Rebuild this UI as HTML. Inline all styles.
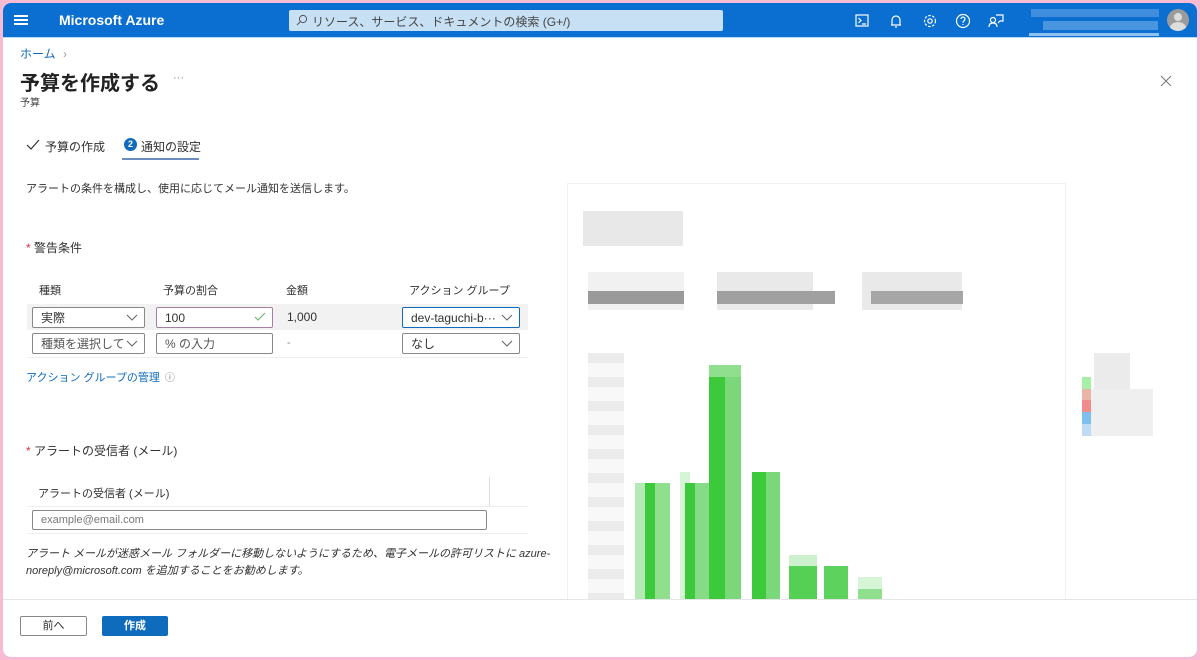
<!DOCTYPE html>
<html><head><meta charset="utf-8"><style>
*{box-sizing:border-box;margin:0;padding:0}
body{width:1200px;height:660px;background:#f7bcd3;font-family:"Liberation Sans","Noto Sans CJK JP",sans-serif;position:relative;overflow:hidden;color:#323130}
.a{position:absolute;white-space:nowrap}
.box{position:absolute;border:1px solid #8a8886;border-radius:2px;background:#fff;font-size:12px;padding-left:8px;line-height:20px;white-space:nowrap}
.chev{position:absolute;right:6px;top:3px}
.g{position:absolute}
</style></head><body>
<div class="a" style="left:3px;top:3px;width:1194px;height:654px;background:#fff;border-radius:8px"></div>
<div class="a" style="left:3px;top:3px;width:1194px;height:34px;background:#0a6fd0;border-radius:8px 8px 0 0"></div>
<div class="a" style="left:14px;top:15px;width:14px;height:2px;background:#fff;box-shadow:0 4px 0 #fff,0 8px 0 #fff"></div>
<div class="a" style="left:59px;top:12px;color:#fff;font-size:14px;font-weight:bold">Microsoft Azure</div>
<div class="a" style="left:289px;top:10px;width:434px;height:21px;background:#c7e0f4;border-radius:2px"></div>
<svg class="a" style="left:296px;top:14px" width="12" height="12" viewBox="0 0 12 12"><circle cx="7" cy="5" r="3.6" fill="none" stroke="#555" stroke-width="1"/><path d="M4.4 7.6L1 11" stroke="#555"/></svg>
<div class="a" style="left:312px;top:13px;font-size:12px;color:#444">リソース、サービス、ドキュメントの検索 (G+/)</div>
<svg class="a" style="left:855px;top:13px" width="120" height="16" viewBox="0 0 120 16" fill="none" stroke="#fff" stroke-width="1.2">
 <rect x="1" y="2" width="12" height="11"/><path d="M3.5 5l2.5 2.5-2.5 2.5M7 11h4"/>
 <path d="M37 12V7a4 4 0 018 0v5zM36 12h10M40 14h2"/>
 <circle cx="75" cy="8" r="2.2"/><circle cx="75" cy="8" r="5.5" stroke-dasharray="2.5 1.5"/>
 <circle cx="108" cy="8" r="6.5"/><path d="M106 6a2 2 0 113 1.8c-1 .5-1 1-1 2M108 11v1"/>
</svg>
<svg class="a" style="left:988px;top:13px" width="16" height="16" fill="none" stroke="#fff" stroke-width="1.2"><circle cx="5" cy="7" r="2.5"/><path d="M1 14c0-3 2-4 4-4s4 1 4 4M8 2h7v6h-3l-2 2"/></svg>
<div class="a" style="left:1031px;top:9px;width:128px;height:8px;background:#4f95e0;opacity:.8"></div>
<div class="a" style="left:1043px;top:21px;width:115px;height:9px;background:#5a9fe3;opacity:.8"></div>
<div class="a" style="left:1029px;top:33px;width:130px;height:3px;background:#8fc0ee"></div>
<div class="a" style="left:1167px;top:9px;width:22px;height:22px;border-radius:50%;background:#9b9b9b;overflow:hidden"><div style="position:absolute;left:7px;top:4px;width:8px;height:8px;border-radius:50%;background:#ddd"></div><div style="position:absolute;left:3px;top:13px;width:16px;height:12px;border-radius:50%;background:#ddd"></div></div>
<div class="a" style="left:3px;top:37px;width:1194px;height:1px;background:#b9dcf6"></div>
<div class="a" style="left:20px;top:45px;font-size:12px;color:#0f6cbd">ホーム <span style="color:#999;margin-left:4px">›</span></div>
<div class="a" style="left:20px;top:67px;font-size:20px;font-weight:bold;color:#222">予算を作成する</div>
<div class="a" style="left:173px;top:72px;font-size:11px;color:#888">···</div>
<div class="a" style="left:20px;top:94px;font-size:10px;color:#444">予算</div>
<svg class="a" style="left:1160px;top:75px" width="12" height="12" stroke="#777" stroke-width="1"><path d="M1 1l10 10M11 1L1 11"/></svg>
<svg class="a" style="left:26px;top:139px" width="14" height="12" fill="none" stroke="#333" stroke-width="1.2"><path d="M1 6l4 4 8-9"/></svg>
<div class="a" style="left:45px;top:138px;font-size:12px">予算の作成</div>
<div class="a" style="left:124px;top:138px;width:13px;height:13px;border-radius:50%;background:#0f6cbd;color:#fff;font-size:9px;font-weight:bold;text-align:center;line-height:13px">2</div>
<div class="a" style="left:141px;top:138px;font-size:12px">通知の設定</div>
<div class="a" style="left:122px;top:158px;width:77px;height:2px;background:#6a8dbd"></div>
<div class="a" style="left:26px;top:180px;font-size:11px">アラートの条件を構成し、使用に応じてメール通知を送信します。</div>
<div class="a" style="left:26px;top:239px;font-size:12px"><span style="color:#d13438">*</span> 警告条件</div>
<div class="a" style="left:39px;top:282px;font-size:11px">種類</div>
<div class="a" style="left:163px;top:282px;font-size:11px">予算の割合</div>
<div class="a" style="left:286px;top:282px;font-size:11px">金額</div>
<div class="a" style="left:409px;top:282px;font-size:11px">アクション グループ</div>
<div class="a" style="left:27px;top:304px;width:501px;height:26px;background:#f2f2f2"></div>
<div class="box" style="left:32px;top:307px;width:113px;height:21px">実際<svg class="chev" width="12" height="12" fill="none" stroke="#666"><path d="M1 4l5 5 5-5"/></svg></div>
<div class="box" style="left:156px;top:307px;width:117px;height:21px;border-color:#a57fa0">100<svg class="chev" width="12" height="12" fill="none" stroke="#6bb36b"><path d="M1 6l3 3 7-7"/></svg></div>
<div class="a" style="left:287px;top:310px;font-size:12px">1,000</div>
<div class="box" style="left:402px;top:307px;width:118px;height:21px;border:1.5px solid #0f6cbd">dev-taguchi-b···<svg class="chev" width="12" height="12" fill="none" stroke="#666"><path d="M1 4l5 5 5-5"/></svg></div>
<div class="box" style="left:32px;top:333px;width:113px;height:21px;color:#555;overflow:hidden">種類を選択して···<svg class="chev" style="background:#fff" width="12" height="12" fill="none" stroke="#666"><path d="M1 4l5 5 5-5"/></svg></div>
<div class="box" style="left:156px;top:333px;width:117px;height:21px;color:#555">% の入力</div>
<div class="a" style="left:287px;top:337px;font-size:11px;color:#888">-</div>
<div class="box" style="left:402px;top:333px;width:118px;height:21px">なし<svg class="chev" width="12" height="12" fill="none" stroke="#666"><path d="M1 4l5 5 5-5"/></svg></div>
<div class="a" style="left:27px;top:357px;width:501px;height:1px;background:#eee"></div>
<div class="a" style="left:26px;top:369px;font-size:11px;color:#0f6cbd">アクション グループの管理 <span style="color:#777;font-size:10px;margin-left:2px">ⓘ</span></div>
<div class="a" style="left:26px;top:442px;font-size:12px"><span style="color:#d13438">*</span> アラートの受信者 (メール)</div>
<div class="a" style="left:38px;top:485px;font-size:11px">アラートの受信者 (メール)</div>
<div class="a" style="left:489px;top:477px;width:1px;height:30px;background:#ddd"></div>
<div class="a" style="left:27px;top:506px;width:501px;height:1px;background:#eee"></div>
<div class="box" style="left:32px;top:510px;width:455px;height:20px;font-size:11px;color:#777;line-height:18px">example@email.com</div>
<div class="a" style="left:27px;top:533px;width:501px;height:1px;background:#eee"></div>
<div class="a" style="left:26px;top:546px;font-size:11px;font-style:italic;line-height:17px">アラート メールが迷惑メール フォルダーに移動しないようにするため、電子メールの許可リストに azure-<br>noreply@microsoft.com を追加することをお勧めします。</div>
<!-- chart panel -->
<div class="a" style="left:567px;top:183px;width:499px;height:417px;border:1px solid #f0f0f0;border-bottom:none"></div>
<div class="g" style="left:583px;top:211px;width:100px;height:35px;background:#e2e2e2;opacity:.8"></div>
<div class="g" style="left:588px;top:272px;width:96px;height:38px;background:#e8e8e8;opacity:.6"></div>
<div class="g" style="left:588px;top:291px;width:96px;height:13px;background:#9a9a9a"></div>
<div class="g" style="left:717px;top:272px;width:96px;height:38px;background:#e0e0e0;opacity:.7"></div>
<div class="g" style="left:717px;top:291px;width:118px;height:13px;background:#a0a0a0"></div>
<div class="g" style="left:862px;top:272px;width:100px;height:38px;background:#e0e0e0;opacity:.7"></div>
<div class="g" style="left:871px;top:291px;width:92px;height:13px;background:#a6a6a6"></div>
<div class="g" style="left:588px;top:353px;width:36px;height:247px;background:repeating-linear-gradient(#ebebeb 0 10px,#f8f8f8 10px 24px)"></div>
<div class="g" style="left:635px;top:483px;width:35px;height:117px;background:linear-gradient(90deg,#b5e9b5 0 10px,#3cc93c 10px 20px,#8fdf8f 20px)"></div>
<div class="g" style="left:680px;top:472px;width:10px;height:128px;background:#d6f4d6"></div>
<div class="g" style="left:685px;top:483px;width:24px;height:117px;background:linear-gradient(90deg,#3cc93c 0 10px,#86dc86 10px)"></div>
<div class="g" style="left:709px;top:365px;width:32px;height:235px;background:linear-gradient(#8fdf8f 0 12px,transparent 12px),linear-gradient(90deg,#3cc93c 0 16px,#7ad87a 16px)"></div>
<div class="g" style="left:752px;top:472px;width:28px;height:128px;background:linear-gradient(90deg,#3cc93c 0 14px,#7ad87a 14px)"></div>
<div class="g" style="left:789px;top:555px;width:28px;height:12px;background:#cdf1cd"></div>
<div class="g" style="left:789px;top:566px;width:28px;height:34px;background:#55d055"></div>
<div class="g" style="left:824px;top:566px;width:24px;height:34px;background:#5dd25d"></div>
<div class="g" style="left:858px;top:577px;width:24px;height:12px;background:#d6f4d6"></div>
<div class="g" style="left:858px;top:589px;width:24px;height:11px;background:#8fdf8f"></div>
<div class="g" style="left:1082px;top:377px;width:9px;height:12px;background:#a7eea7"></div>
<div class="g" style="left:1082px;top:389px;width:9px;height:12px;background:#e8b5a8"></div>
<div class="g" style="left:1082px;top:400px;width:9px;height:12px;background:#f08c8c"></div>
<div class="g" style="left:1082px;top:412px;width:9px;height:12px;background:#7fbfee"></div>
<div class="g" style="left:1082px;top:424px;width:9px;height:12px;background:#c0dcf4"></div>
<div class="g" style="left:1094px;top:353px;width:36px;height:36px;background:#e3e3e3;opacity:.7"></div>
<div class="g" style="left:1091px;top:389px;width:62px;height:47px;background:#e8e8e8;opacity:.7"></div>
<!-- footer -->
<div class="a" style="left:3px;top:599px;width:1194px;height:1px;background:#e5e5e5"></div>
<div class="a" style="left:20px;top:616px;width:67px;height:20px;border:1px solid #8a8886;border-radius:2px;font-size:11px;text-align:center;line-height:18px">前へ</div>
<div class="a" style="left:102px;top:616px;width:66px;height:20px;background:#0f6cbd;border-radius:2px;font-size:11px;font-weight:bold;color:#fff;text-align:center;line-height:20px">作成</div>
</body></html>
